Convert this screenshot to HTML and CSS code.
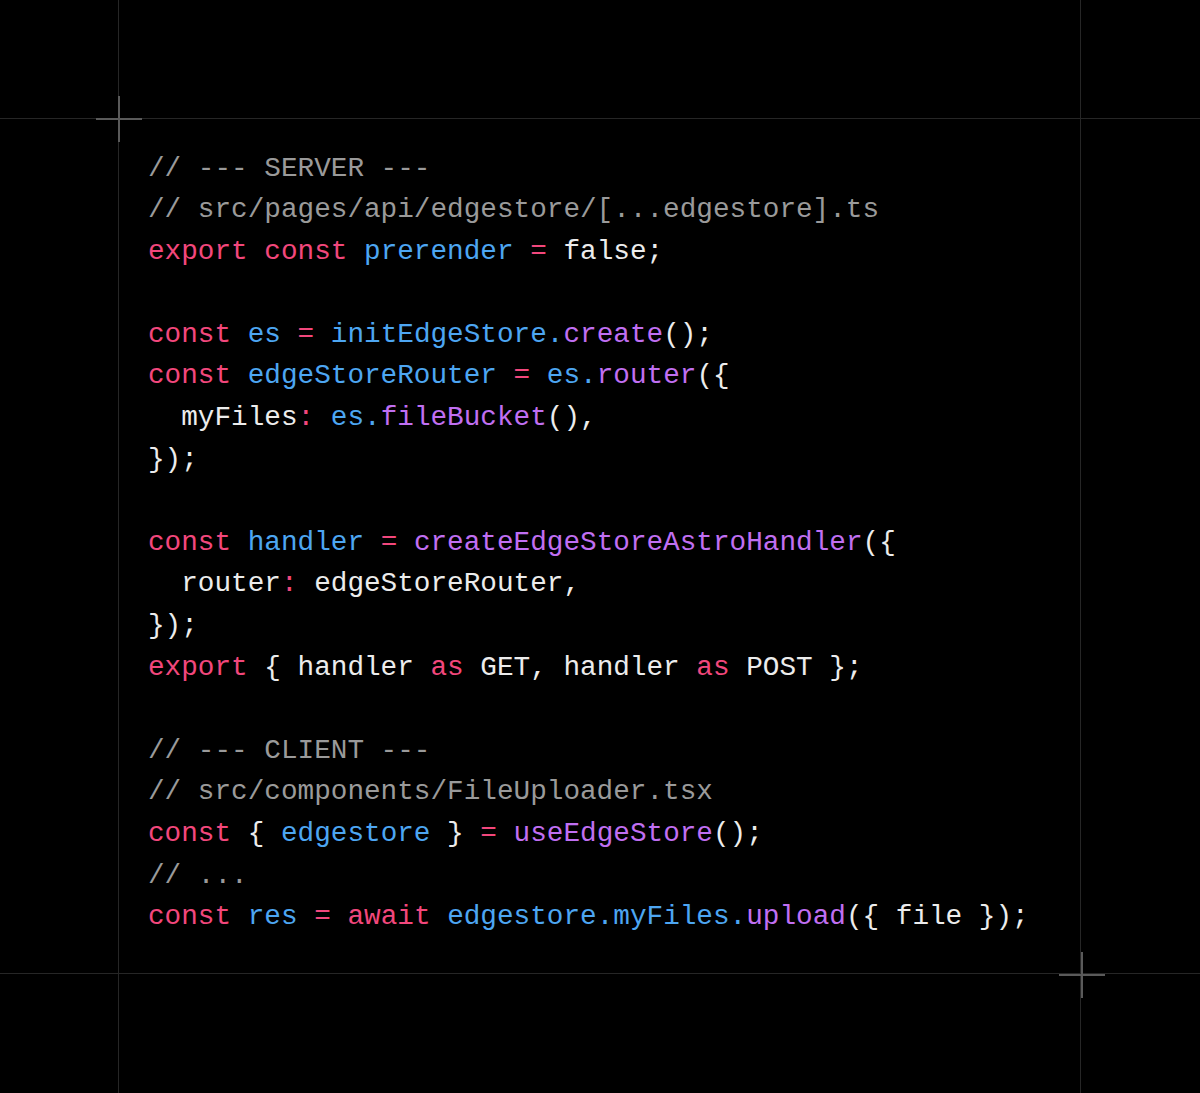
FILE: index.html
```html
<!DOCTYPE html>
<html lang="en">
<head>
<meta charset="utf-8">
<title>EdgeStore Astro</title>
<link rel="stylesheet" href="styles.css">
</head>
<body>
<div class="page">
  <div class="frame">
    <span class="cross cross-tl"></span>
    <span class="cross cross-br"></span>
<pre class="code"><span class="c">// --- SERVER ---</span>
<span class="c">// src/pages/api/edgestore/[...edgestore].ts</span>
<span class="k">export const</span> <span class="v">prerender</span> <span class="k">=</span> false;

<span class="k">const</span> <span class="v">es</span> <span class="k">=</span> <span class="v">initEdgeStore.</span><span class="f">create</span>();
<span class="k">const</span> <span class="v">edgeStoreRouter</span> <span class="k">=</span> <span class="v">es.</span><span class="f">router</span>({
  myFiles<span class="k">:</span> <span class="v">es.</span><span class="f">fileBucket</span>(),
});

<span class="k">const</span> <span class="v">handler</span> <span class="k">=</span> <span class="f">createEdgeStoreAstroHandler</span>({
  router<span class="k">:</span> edgeStoreRouter,
});
<span class="k">export</span> { handler <span class="k">as</span> GET, handler <span class="k">as</span> POST };

<span class="c">// --- CLIENT ---</span>
<span class="c">// src/components/FileUploader.tsx</span>
<span class="k">const</span> { <span class="v">edgestore</span> } <span class="k">=</span> <span class="f">useEdgeStore</span>();
<span class="c">// ...</span>
<span class="k">const</span> <span class="v">res</span> <span class="k">=</span> <span class="k">await</span> <span class="v">edgestore.myFiles.</span><span class="f">upload</span>({ file });</pre>
  </div>
</div>
</body>
</html>
```

FILE: styles.css
```css
html, body {
  margin: 0;
  padding: 0;
  background: #000;
}

body {
  width: 1200px;
  height: 1093px;
  overflow: hidden;
}

.page {
  height: 1093px;
  display: flex;
  align-items: center;
  justify-content: center;
  background-image:
    linear-gradient(to right, transparent 118px, #262626 118px, #262626 119px, transparent 119px),
    linear-gradient(to right, transparent 1080px, #262626 1080px, #262626 1081px, transparent 1081px),
    linear-gradient(to bottom, transparent 118px, #262626 118px, #262626 119px, transparent 119px),
    linear-gradient(to bottom, transparent 973px, #262626 973px, #262626 974px, transparent 974px);
}

.frame {
  position: relative;
  box-sizing: border-box;
  width: 962px;
  height: 855px;
  margin-top: -1px;
  padding: 29px 29px;
}

.cross {
  position: absolute;
  width: 46px;
  height: 46px;
  background-image:
    linear-gradient(to right, transparent 22px, #5a5a5a 22px, #5a5a5a 24px, transparent 24px),
    linear-gradient(to bottom, transparent 22px, #5a5a5a 22px, #5a5a5a 24px, transparent 24px);
}

.cross-tl {
  left: -23px;
  top: -23px;
}

.cross-br {
  right: -24px;
  bottom: -24px;
}

.code {
  margin: 0;
  font-family: "Liberation Mono", "DejaVu Sans Mono", monospace;
  font-size: 27.7px;
  line-height: 41.6px;
  color: #ececec;
  white-space: pre;
}

.c { color: #9a9a9a; }
.k { color: #f2477c; }
.v { color: #4da6f2; }
.f { color: #c06ff2; }
```
